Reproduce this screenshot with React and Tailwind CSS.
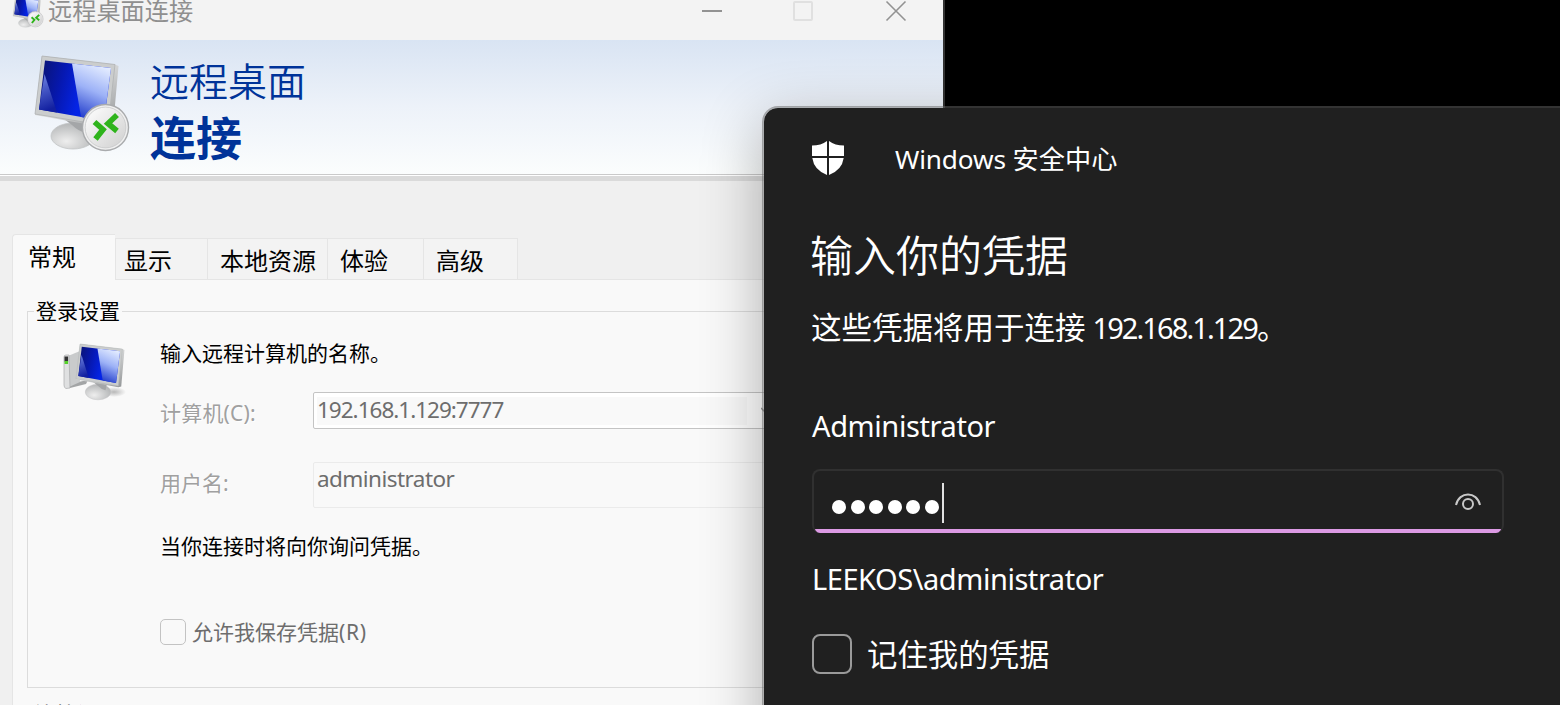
import React from 'react';

function Screen({ id }) {
  return (
    <defs>
      <linearGradient id={id + 'blue'} x1="0" y1="0.3" x2="1" y2="0.5">
        <stop offset="0" stopColor="#0a1478" />
        <stop offset="0.3" stopColor="#0618b0" />
        <stop offset="0.6" stopColor="#0424e6" />
        <stop offset="1" stopColor="#0420e0" />
      </linearGradient>
      <linearGradient id={id + 'shine'} x1="0.6" y1="0" x2="0.3" y2="1">
        <stop offset="0" stopColor="#e2ebff" />
        <stop offset="0.45" stopColor="#9db2f7" />
        <stop offset="1" stopColor="#1a35c8" />
      </linearGradient>
      <linearGradient id={id + 'corner'} x1="0" y1="0" x2="0.2" y2="1">
        <stop offset="0" stopColor="#7186e4" />
        <stop offset="1" stopColor="#1220a0" />
      </linearGradient>
      <linearGradient id={id + 'frame'} x1="0" y1="0" x2="1" y2="1">
        <stop offset="0" stopColor="#b9bcbd" />
        <stop offset="0.5" stopColor="#dcdddd" />
        <stop offset="1" stopColor="#8f9294" />
      </linearGradient>
      <radialGradient id={id + 'base'} cx="0.35" cy="0.7" r="0.7">
        <stop offset="0" stopColor="#eeeeee" />
        <stop offset="1" stopColor="#b4b6b7" />
      </radialGradient>
      <linearGradient id={id + 'disc'} x1="0" y1="0" x2="1" y2="1">
        <stop offset="0" stopColor="#ffffff" />
        <stop offset="1" stopColor="#cfcfcf" />
      </linearGradient>
    </defs>
  );
}

function Monitor({ id }) {
  const url = (n) => `url(#${id}${n})`;
  return (
    <g>
      <ellipse cx="53" cy="91" rx="22" ry="13" fill={url('base')} stroke="#c2c4c5" strokeWidth="0.8" />
      <path d="M44 74 L68 79 L66 88 Q58 86 52 80 Z" fill="#a4a6a8" />
      <path d="M22 11 L95 19.5 L98.5 21 L93 82 L88 83 L15 70 Z" fill={url('frame')} />
      <path d="M22 11 L95 19.5 L88 81 L15 69 Z" fill="#cbcdcd" stroke="#b0b3b4" strokeWidth="0.8" />
      <path d="M25 15.5 L91 23 L84 76 L19 64.5 Z" fill={url('blue')} />
      <path d="M52 18.5 L91 23 L84 76 L61 72 Z" fill={url('shine')} />
      <path d="M24.5 29 L37 67.5 L19 64.5 Z" fill={url('corner')} />
    </g>
  );
}

function RemoteBadge({ id }) {
  return (
    <g>
      <circle cx="85.5" cy="82.5" r="23" fill="#f0f0f0" stroke="#a9abad" strokeWidth="1.4" />
      <circle cx="85.5" cy="82.5" r="20.4" fill={`url(#${id}disc)`} stroke="#c6c8c9" strokeWidth="0.8" />
      <path d="M74.500 77 L83 84.500 L75.500 94" fill="none" stroke="#2fb41c" strokeWidth="5.600" />
      <path d="M97 70 L88 78.500 L97 86" fill="none" stroke="#2fb41c" strokeWidth="5.600" />
    </g>
  );
}

function RemoteIcon({ id, className, badge }) {
  return (
    <svg viewBox="0 0 120 115" className={className}>
      <Screen id={id} />
      <Monitor id={id} />
      <g transform={badge}>
        <RemoteBadge id={id} />
      </g>
    </svg>
  );
}

function ComputerIcon() {
  return (
    <svg viewBox="0 0 90 75" className="h-[75px] w-[90px]">
      <Screen id="pc" />
      <defs>
        <radialGradient id="pcshadow">
          <stop offset="0" stopColor="#777" stopOpacity="0.5" />
          <stop offset="1" stopColor="#777" stopOpacity="0" />
        </radialGradient>
      </defs>
      <ellipse cx="64" cy="58" rx="12" ry="5" fill="url(#pcshadow)" />
      <path d="M18 50 L38 46 L36 50 L20 54 Z" fill="#a3a5a6" />
      <path d="M18 22 L30 17 L30 48 L19 53 Z" fill="#c9cbcc" />
      <path d="M14 23 Q14 21 16 21 L19 21 L20 54 L16 54.500 Q14 54 14 51 Z" fill="#dfe0e1" stroke="#a9abac" strokeWidth="0.7" />
      <rect x="14.500" y="22.500" width="3.600" height="5" fill="#333" />
      <rect x="14.500" y="27" width="3.600" height="3" fill="#55d12a" />
      <g transform="translate(17.3 3.4) scale(0.58 0.6)">
        <Monitor id="pc" />
      </g>
    </svg>
  );
}

function Tab({ children, className }) {
  return (
    <div className={`h-[42px] border-t border-r border-b border-[#e5e5e5] bg-[#f3f3f3] pt-[5px] text-[24px] leading-[34px] whitespace-nowrap ${className}`}>
      {children}
    </div>
  );
}

function RemoteWindow() {
  return (
    <div className="flex h-full w-[945px] flex-col overflow-hidden border-r-2 border-[#333] bg-[#f0f0f0] text-black">
      <header className="flex h-10 shrink-0 items-start bg-[#f3f3f3] text-[#8f8f8f]">
        <RemoteIcon id="small" badge="translate(-6 -6) scale(1.03)" className="-mt-[7px] ml-[8px] h-[38px] w-[40px] shrink-0" />
        <span className="-mt-[7px] text-[24.200px] leading-[36px]">远程桌面连接</span>
        <svg viewBox="0 0 220 24" className="mr-[30px] ml-auto h-6 w-[220px]" fill="none">
          <path d="M9 11 H29" stroke="#929292" strokeWidth="2" />
          <rect x="101" y="2" width="18" height="18" rx="1" stroke="#e0e0e0" strokeWidth="2" />
          <path d="M193.500 1.500 L212.500 20.500 M212.500 1.500 L193.500 20.500" stroke="#929292" strokeWidth="1.6" />
        </svg>
      </header>
      <div className="flex h-[134px] shrink-0 bg-linear-to-b from-[#d9e4f3] via-[#edf2f9] to-[#fbfdfd] text-[#003399]">
        <RemoteIcon id="big" className="mt-[5px] ml-[20px] h-[115px] w-[120px]" />
        <div className="ml-[10px] pt-[14px]">
          <div className="text-[39px] leading-[54px] font-[350]">远程桌面</div>
          <div className="mt-px text-[46px] leading-[56px] font-bold">连接</div>
        </div>
      </div>
      <div className="h-[7px] shrink-0 border-t border-[#cacaca] bg-white pt-px">
        <div className="h-[5px] bg-[#dadada]" />
      </div>
      <div className="flex h-[99px] shrink-0 items-end pl-3">
        <div className="h-[46px] w-[103px] rounded-tl-sm border-t border-l border-[#e5e5e5] bg-[#f9f9f9] pt-[5px] pl-[15px] text-[24px] leading-[34px]">常规</div>
        <Tab className="w-[93px] border-l pl-[8px]">显示</Tab>
        <Tab className="w-[120px] pl-[12px]">本地资源</Tab>
        <Tab className="w-[96px] pl-[12px]">体验</Tab>
        <Tab className="w-[94px] pl-[12px]">高级</Tab>
        <div className="h-px flex-1 bg-[#e5e5e5]" />
      </div>
      <div className="ml-3 flex-1 border-l border-[#e5e5e5] bg-[#f9f9f9] pl-[14px]">
        <fieldset className="mt-[16px] h-[392px] w-[940px] border border-[#dcdcdc]">
          <legend className="ml-[6px] px-[2px] text-[21px] leading-[30px]">登录设置</legend>
          <div className="flex">
            <div className="-mr-[8px] ml-[22px] pt-[8px]">
              <ComputerIcon />
            </div>
            <div className="ml-[28px] pt-[12px] text-[21px]">
              <div className="leading-[30px]">输入远程计算机的名称。</div>
              <div className="mt-[24px] flex h-[37px]">
                <span className="w-[153px] pt-[6px] leading-[30px] tracking-[0.2px] text-[#a0a0a0] [text-shadow:1px_1px_#fff]">计算机(C):</span>
                <div className="flex flex-1 items-center rounded-xs border border-[#c4c4c4] bg-white">
                  <div className="ml-[3px] h-[28px] w-[430px] bg-[#f9f9f9] text-[22.500px] leading-[26px] tracking-[-1px] text-[#6d6d6d]">192.168.1.129:7777</div>
                  <svg viewBox="0 0 12 8" className="ml-[14px] h-2 w-3 shrink-0" fill="none" stroke="#999" strokeWidth="1.500">
                    <path d="M0 1 L6 7 L12 1" />
                  </svg>
                </div>
              </div>
              <div className="mt-[33px] flex h-[46px]">
                <span className="w-[153px] pt-[6px] leading-[30px] text-[#a0a0a0] [text-shadow:1px_1px_#fff]">用户名:</span>
                <div className="w-[600px] rounded-xs border border-[#ebebeb] pl-[3px] text-[22.500px] leading-[32px] tracking-[-0.55px] text-[#6d6d6d]">administrator</div>
              </div>
              <div className="mt-[23px] leading-[30px]">当你连接时将向你询问凭据。</div>
              <div className="mt-[56px] flex items-center text-[#6d6d6d]">
                <span className="mr-[6px] size-[26px] rounded-[5px] border-[1.500px] border-[#c3c3c3]" />
                <span className="leading-[30px]">允许我保存凭据<span className="tracking-[0.700px]">(R)</span></span>
              </div>
            </div>
          </div>
        </fieldset>
        <div className="mt-[11px] ml-[8px] text-[21px] leading-[30px]">连接设置</div>
      </div>
    </div>
  );
}

function SecurityWindow() {
  return (
    <div className="absolute top-[106px] left-[762px] flex h-[700px] w-[900px] flex-col rounded-[16px] border-2 border-[rgba(102,102,102,0.5)] bg-[#202020] bg-clip-padding pl-[48px] text-white shadow-[0_16px_60px_rgba(0,0,0,0.3)]">
      <div className="flex h-[104px] items-center">
        <svg viewBox="0 0 32 34" className="mt-[-4px] h-[34px] w-8" fill="#fff">
          <path d="M15 0 V15 H0 V4.500 Q9 4.500 15 0 Z M17 0 Q23 4.500 32 4.500 V15 H17 Z M0.300 17 H15 V34 Q2 29 0.300 17 Z M17 17 H31.700 Q30 29 17 34 Z" />
        </svg>
        <div className="-mt-[2px] ml-[51px] text-[26.200px] leading-10">
          <span className="tracking-[-0.15px]">Windows</span> 安全中心
        </div>
      </div>
      <h1 className="mt-[14px] -ml-[2px] text-[43px] leading-[60px] font-[350]">输入你的凭据</h1>
      <div className="mt-[21px] -ml-px text-[30.500px] leading-[40px]">
        这些凭据将用于连接 <span className="-ml-px text-[29px] tracking-[-1.900px]">192.168.1.129</span>。
      </div>
      <div className="mt-[58px] text-[29px] leading-[40px] tracking-[-0.4px]">Administrator</div>
      <div className="relative mt-[23px] flex h-[64px] w-[692px] items-center overflow-hidden rounded-[8px] border-2 border-b-0 border-[#303030] pl-[18px]">
        <div className="mt-[9px] flex gap-[4.600px]">
          {[0, 1, 2, 3, 4, 5].map((i) => (
            <span key={i} className="size-[14px] rounded-full bg-white" />
          ))}
        </div>
        <span className="mt-px ml-[3px] h-[40px] w-[2px] bg-[#e0e0e0]" />
        <svg viewBox="0 0 28 20" className="mr-[20px] ml-auto h-5 w-7" fill="none" stroke="#c8c8c8" strokeWidth="2">
          <path d="M2 13 C5 -1 23 -1 26 13" />
          <circle cx="14" cy="12" r="5" />
        </svg>
        <span className="absolute -right-0.5 bottom-0 -left-0.5 h-1 bg-[#dc9ae4]" />
      </div>
      <div className="mt-[26px] text-[29px] leading-[40px] tracking-[-0.45px]">LEEKOS\administrator</div>
      <div className="mt-[34px] flex items-center">
        <span className="size-10 rounded-[8px] border-2 border-[#9a9a9a]" />
        <span className="mt-[2px] -ml-px pl-[16px] text-[30.400px] leading-[40px]">记住我的凭据</span>
      </div>
    </div>
  );
}

export default function App() {
  return (
    <main className="relative h-[705px] w-[1560px] overflow-hidden bg-black font-['Noto_Sans','Noto_Sans_CJK_SC',sans-serif]">
      <RemoteWindow />
      <SecurityWindow />
    </main>
  );
}
